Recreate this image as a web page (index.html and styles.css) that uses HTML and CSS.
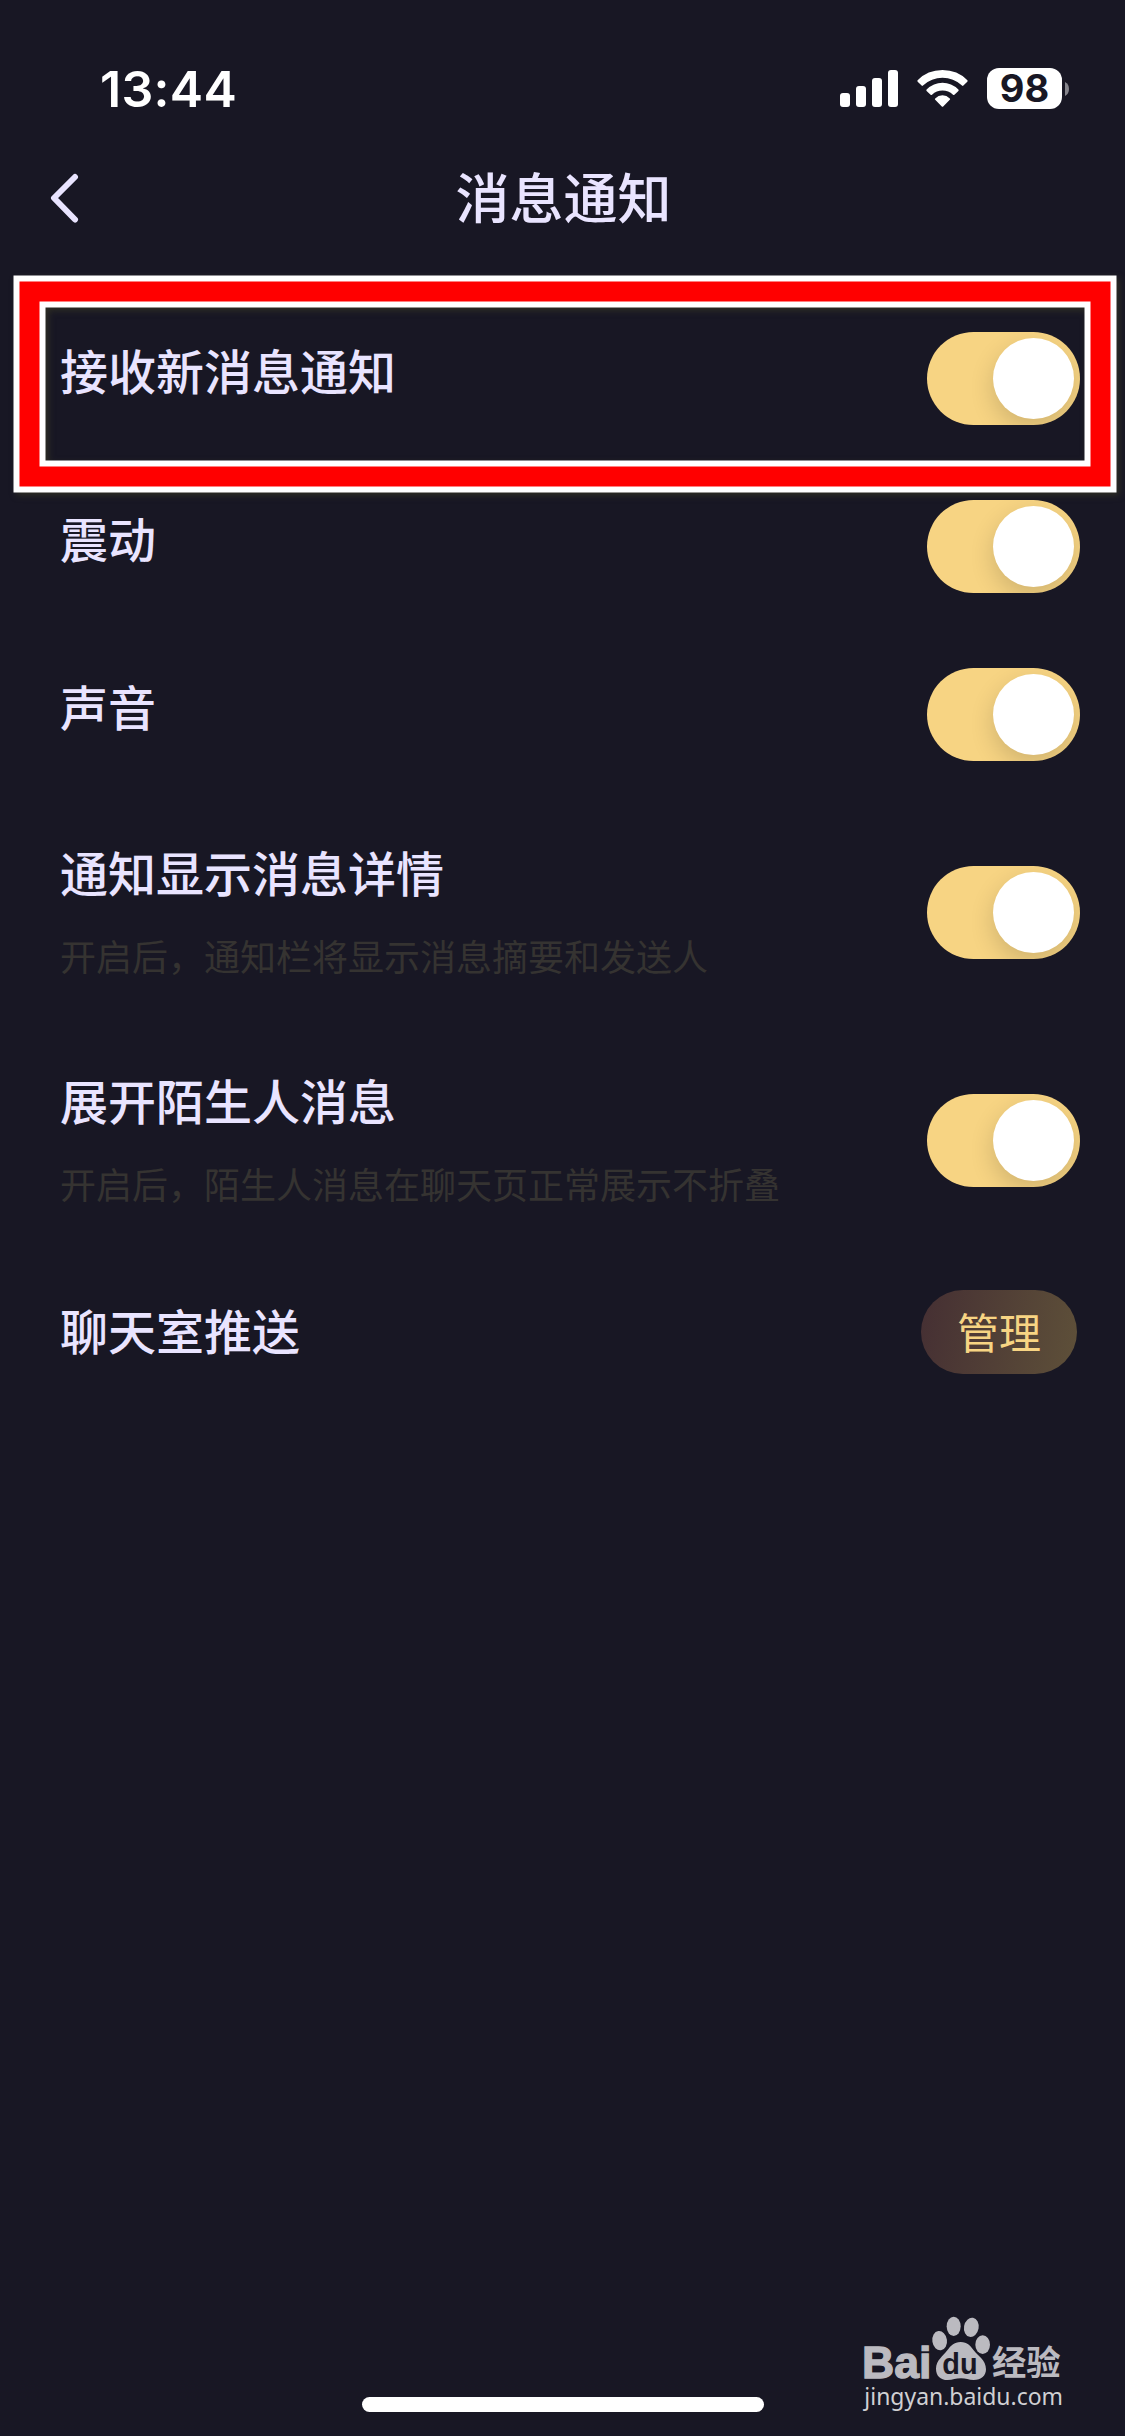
FILE: index.html
```html
<!DOCTYPE html>
<html lang="zh-CN">
<head>
<meta charset="utf-8">
<title>消息通知</title>
<link rel="stylesheet" href="styles.css">
</head>
<body>
<div class="screen">
  <header class="status-bar">
    <span class="time">13:44</span>
    <div class="status-icons">
      <svg class="signal" width="58" height="37" viewBox="0 0 58 37" fill="#fff">
        <rect x="0" y="23" width="10" height="14" rx="3"/>
        <rect x="16" y="16" width="10" height="21" rx="3"/>
        <rect x="32" y="8" width="10" height="29" rx="3"/>
        <rect x="48" y="0" width="10" height="37" rx="3"/>
      </svg>
      <svg class="wifi" width="51" height="37" viewBox="0 0 51 37" fill="#fff">
        <path d="M.6 10.2Q10.500 0 25.500 0T50.400 10.200Q51 11 50.300 11.800L46.400 15.600Q45.700 16.200 45 15.500Q36.500 7.800 25.500 7.800T6 15.500Q5.300 16.200 4.600 15.600L.7 11.800Q0 11 .6 10.200Z"/>
        <path d="M9.600 19.500Q16.500 12.700 25.500 12.700T41.400 19.500Q42 20.200 41.400 20.900L37.400 24.700Q36.700 25.300 36 24.700Q31.500 20.500 25.500 20.500T15 24.700Q14.300 25.300 13.600 24.700L9.600 20.900Q9 20.200 9.600 19.500Z"/>
        <path d="M18.200 28.400Q21.300 25.300 25.500 25.300T32.800 28.400Q33.500 29.100 32.800 29.800L26.200 36.400Q25.500 37 24.800 36.400L18.200 29.800Q17.500 29.100 18.200 28.400Z"/>
      </svg>
      <div class="battery"><span class="battery-level">98</span></div>
      <svg class="battery-cap" width="4" height="14" viewBox="0 0 4 14" fill="#86858c"><path d="M0 0Q4 2 4 7T0 14Z"/></svg>
    </div>
  </header>

  <nav class="nav-bar">
    <svg class="back" width="30" height="50" viewBox="0 0 30 50" fill="none" stroke="#e9e4ff" stroke-width="6" stroke-linecap="round" stroke-linejoin="round"><path d="M25 4L4 25L25 46.500"/></svg>
    <h1 class="title">消息通知</h1>
  </nav>

  <main class="settings">
    <div class="row">
      <div class="label">接收新消息通知</div>
      <div class="toggle"><span class="knob"></span></div>
      <svg class="highlight" width="1125" height="240" viewBox="0 0 1125 240" fill="none">
        <rect x="29.500" y="23.500" width="1071" height="185" stroke="#fff" stroke-width="32"/>
        <rect x="29.500" y="23.500" width="1071" height="185" stroke="#f00" stroke-width="20"/>
      </svg>
    </div>
    <div class="row">
      <div class="label">震动</div>
      <div class="toggle"><span class="knob"></span></div>
    </div>
    <div class="row">
      <div class="label">声音</div>
      <div class="toggle"><span class="knob"></span></div>
    </div>
    <div class="row row-tall">
      <div class="copy">
        <div class="label">通知显示消息详情</div>
        <div class="hint">开启后，通知栏将显示消息摘要和发送人</div>
      </div>
      <div class="toggle"><span class="knob"></span></div>
    </div>
    <div class="row row-tall">
      <div class="copy">
        <div class="label">展开陌生人消息</div>
        <div class="hint">开启后，陌生人消息在聊天页正常展示不折叠</div>
      </div>
      <div class="toggle"><span class="knob"></span></div>
    </div>
    <div class="row">
      <div class="label">聊天室推送</div>
      <div class="manage">管理</div>
    </div>
  </main>

  <div class="home-indicator"></div>

  <svg class="watermark" width="285" height="146" viewBox="0 0 855 438" fill="#bbbac0">
    <text class="wm-latin" x="66" y="263" font-size="135" textLength="208" lengthAdjust="spacingAndGlyphs">Bai</text>
    <ellipse cx="299" cy="152" rx="22" ry="29" transform="rotate(-8 299 152)"/>
    <ellipse cx="341" cy="109" rx="21" ry="29"/>
    <ellipse cx="394" cy="112" rx="22" ry="29" transform="rotate(10 394 112)"/>
    <ellipse cx="428" cy="164" rx="22" ry="28"/>
    <path d="M362 156C382 156 392 168 401 181C413 197 438 210 438 238C438 257 424 270 401 270C386 270 378 265 363 265C347 265 339 270 323 270C301 270 288 257 288 236C288 211 310 198 322 181C332 167 342 156 362 156Z"/>
    <text class="wm-du" x="307" y="252" font-size="86" textLength="106" lengthAdjust="spacingAndGlyphs">du</text>
    <text class="wm-cjk" x="456" y="254" font-size="102" textLength="206" lengthAdjust="spacingAndGlyphs">经验</text>
    <text class="wm-url" x="73" y="344" font-size="70" textLength="596" lengthAdjust="spacingAndGlyphs">jingyan.baidu.com</text>
  </svg>
</div>
</body>
</html>
```
FILE: styles.css
```css
* {
  box-sizing: border-box;
}

body {
  margin: 0;
  background: #181724;
  color: #e9e4ff;
  font-family: "Noto Sans CJK SC", sans-serif;
}

.screen {
  position: relative;
  display: flex;
  flex-direction: column;
  width: 1125px;
  height: 2436px;
  overflow: hidden;
}

.status-bar {
  display: flex;
  justify-content: space-between;
  height: 132px;
  padding: 59px 56px 0 100px;
  color: #fff;
  font-family: Inter, sans-serif;
}

.time {
  font-size: 50px;
  font-weight: 600;
  letter-spacing: 0.3px;
  line-height: 60px;
}

.status-icons {
  display: flex;
  align-items: center;
  height: 59px;
}

.wifi {
  margin-left: 19px;
}

.battery {
  width: 75px;
  height: 41px;
  margin-left: 19px;
  border-radius: 12px;
  background: #fff;
  color: #181724;
  text-align: center;
}

.battery-level {
  display: block;
  font-size: 38px;
  font-weight: 700;
  line-height: 41px;
}

.battery-cap {
  margin-left: 3px;
}

.nav-bar {
  display: grid;
  grid-template-columns: 130px 1fr 130px;
  align-items: center;
  height: 132px;
}

.back {
  margin-left: 50px;
}

.title {
  margin: -4px 0 0 2px;
  font-size: 54px;
  font-weight: 500;
  line-height: 80px;
  text-align: center;
}

.settings {
  flex: 1;
  padding-top: 24px;
}

.row {
  position: relative;
  display: flex;
  align-items: center;
  justify-content: space-between;
  height: 168px;
  padding: 0 45px 0 60px;
}

.row-tall {
  height: 228px;
}

.copy {
  margin-top: 11px;
}

.label {
  margin-top: -6px;
  font-size: 48px;
  font-weight: 500;
  line-height: 72px;
}

.hint {
  margin-top: 21px;
  color: #353331;
  font-size: 36px;
  line-height: 54px;
}

.toggle {
  display: flex;
  justify-content: flex-end;
  width: 153px;
  height: 93px;
  margin-top: 13px;
  padding: 6px;
  border-radius: 46.5px;
  background: #f7d483;
  overflow: hidden;
}

.knob {
  width: 81px;
  height: 81px;
  border-radius: 50%;
  background: #fff;
  box-shadow: 0 9px 24px rgba(0, 0, 0, 0.16);
}

.highlight {
  position: absolute;
  top: -20px;
  left: 0;
  filter: drop-shadow(3px 3px 3px rgba(60, 60, 35, 0.6));
}

.manage {
  width: 156px;
  height: 84px;
  margin-right: 3px;
  border-radius: 42px;
  background: linear-gradient(100deg, #452f33, #5e5039);
  color: #f7d483;
  font-size: 42px;
  line-height: 81px;
  text-align: center;
}

.home-indicator {
  width: 402px;
  height: 15px;
  margin: 0 auto 24px;
  border-radius: 8px;
  background: #fff;
}

.watermark {
  position: absolute;
  right: 0;
  bottom: 0;
}

.wm-latin {
  font-family: "Liberation Sans", sans-serif;
  font-weight: 700;
  stroke: #bbbac0;
  stroke-width: 4px;
}

.wm-du {
  fill: #181724;
  font-family: "Liberation Sans", sans-serif;
  font-weight: 700;
}

.wm-cjk {
  font-family: "Noto Sans CJK SC", sans-serif;
  font-weight: 700;
}

.wm-url {
  fill: #d0d0d3;
  font-family: "Noto Sans", sans-serif;
}
```
